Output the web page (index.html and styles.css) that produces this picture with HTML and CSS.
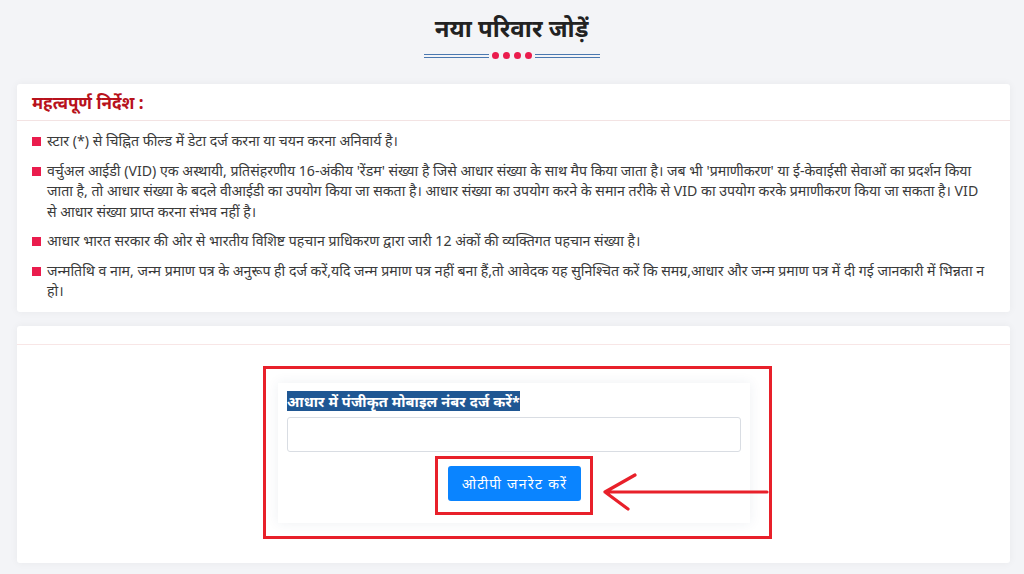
FILE: index.html
```html
<!DOCTYPE html>
<html lang="hi">
<head>
<meta charset="utf-8">
<link rel="stylesheet" href="styles.css">
</head>
<body>
<div class="page">
  <div class="title-wrap">
    <h1 class="title">नया परिवार जोड़ें</h1>
    <div class="title-deco">
      <span class="deco-line"></span>
      <span class="dots"><i></i><i></i><i></i><i></i></span>
      <span class="deco-line"></span>
    </div>
  </div>

  <section class="card">
    <div class="card-head"><h2 class="notice-title">महत्वपूर्ण निर्देश :</h2></div>
    <ul class="notes">
      <li>स्टार (*) से चिह्नित फील्ड में डेटा दर्ज करना या चयन करना अनिवार्य है।</li>
      <li>वर्चुअल आईडी (VID) एक अस्थायी, प्रतिसंहरणीय 16-अंकीय 'रेंडम' संख्या है जिसे आधार संख्या के साथ मैप किया जाता है। जब भी 'प्रमाणीकरण' या ई-केवाईसी सेवाओं का प्रदर्शन किया जाता है, तो आधार संख्या के बदले वीआईडी का उपयोग किया जा सकता है। आधार संख्या का उपयोग करने के समान तरीके से VID का उपयोग करके प्रमाणीकरण किया जा सकता है। VID से आधार संख्या प्राप्त करना संभव नहीं है।</li>
      <li>आधार भारत सरकार की ओर से भारतीय विशिष्ट पहचान प्राधिकरण द्वारा जारी 12 अंकों की व्यक्तिगत पहचान संख्या है।</li>
      <li>जन्मतिथि व नाम, जन्म प्रमाण पत्र के अनुरूप ही दर्ज करें,यदि जन्म प्रमाण पत्र नहीं बना हैं,तो आवेदक यह सुनिश्चित करें कि समग्र,आधार और जन्म प्रमाण पत्र में दी गई जानकारी में भिन्नता न हो।</li>
    </ul>
  </section>

  <section class="card card-form">
    <div class="card-head empty"></div>
    <div class="form-body">
      <div class="mark-box">
        <div class="form-panel">
          <label class="field-label" for="mobile"><span class="hl">आधार में पंजीकृत मोबाइल नंबर दर्ज करें*</span></label>
          <input id="mobile" class="field-input" type="text">
          <div class="btn-row">
            <div class="btn-mark"><button class="btn-otp" type="button">ओटीपी जनरेट करें</button></div>
          </div>
        </div>
        <svg class="arrow" width="170" height="44" viewBox="0 0 170 44">
          <path d="M4 22 H166 M34 5 L4 22 L27 39" fill="none" stroke="#e8202a" stroke-width="3.2" stroke-linecap="round" stroke-linejoin="round"/>
        </svg>
      </div>
    </div>
  </section>
</div>
</body>
</html>
```
FILE: styles.css
```css
* { box-sizing: border-box; }
html, body { margin: 0; padding: 0; }
body {
  background: #f3f4f7;
  font-family: "Noto Sans", "Noto Sans Devanagari", "Lohit Devanagari", "Liberation Sans", sans-serif;
  color: #333;
  width: 1024px;
  height: 574px;
  overflow: hidden;
}
.page {
  padding: 0 14px 0 17px;
}
.title-wrap {
  display: flex;
  flex-direction: column;
  align-items: center;
  padding-top: 12px;
  margin-left: -4px;
}
.title {
  margin: 0;
  font-size: 24px;
  line-height: 32px;
  font-weight: 700;
  color: #222;
}
.title-deco {
  display: flex;
  align-items: center;
  margin-top: 8px;
  gap: 3px;
}
.deco-line {
  width: 65px;
  height: 4px;
  border-top: 1px solid #4a78b0;
  border-bottom: 1px solid #4a78b0;
}
.dots { display: flex; gap: 4px; }
.dots i {
  width: 7px; height: 7px;
  border-radius: 50%;
  background: #ea1c4d;
}
.card {
  background: #fff;
  margin-top: 25px;
  box-shadow: 0 0 8px rgba(0,0,0,0.05);
  border-radius: 3px;
}
.card-head {
  height: 37px;
  border-bottom: 1px solid #f3e3e3;
  display: flex;
  align-items: center;
  padding-left: 15px;
}
.notice-title {
  margin: 0;
  font-size: 17px;
  font-weight: 700;
  color: #b8121c;
}
.notes {
  list-style: none;
  margin: 0;
  padding: 10px 23px 10px 15px;
}
.notes li {
  position: relative;
  padding-left: 15px;
  font-size: 14.15px;
  line-height: 20.5px;
  color: #3a3a3a;
  margin-bottom: 9px;
}
.notes li:last-child { margin-bottom: 0; }
.notes li::before {
  content: "";
  position: absolute;
  left: 0;
  top: 6px;
  width: 9px;
  height: 9px;
  background: #ea1c4d;
}
.card-form { margin-top: 14px; }
.card-head.empty { height: 19px; border-bottom-color: #f8e6e6; }
.form-body {
  display: flex;
  justify-content: center;
  padding: 21px 0 24px 8px;
}
.mark-box {
  position: relative;
  width: 509px;
  border: 3px solid #e8202a;
  padding: 14px 19px 13px 12px;
}
.form-panel {
  background: #fff;
  box-shadow: 0 0 12px rgba(40,60,100,0.08);
  padding: 9px 9px 8px 9px;
}
.field-label { display: block; line-height: 19px; }
.hl {
  background: #1f5793;
  color: #fff;
  font-weight: 700;
  font-size: 14.5px;
  letter-spacing: 0.1px;
}
.field-input {
  display: block;
  width: 100%;
  height: 35px;
  margin-top: 6px;
  border: 1px solid #d9dde3;
  border-radius: 3px;
  background: #fff;
}
.btn-row {
  display: flex;
  justify-content: center;
  margin-top: 4px;
}
.btn-mark {
  border: 3px solid #e8202a;
  padding: 7px 9px 11px 10px;
}
.btn-otp {
  display: block;
  width: 133px;
  height: 35px;
  background: #0a84ff;
  color: #fff;
  border: 0;
  border-radius: 3px;
  font-family: inherit;
  font-size: 14px;
  letter-spacing: 1.3px;
}
.arrow {
  position: absolute;
  left: 335px;
  top: 101px;
}
```
